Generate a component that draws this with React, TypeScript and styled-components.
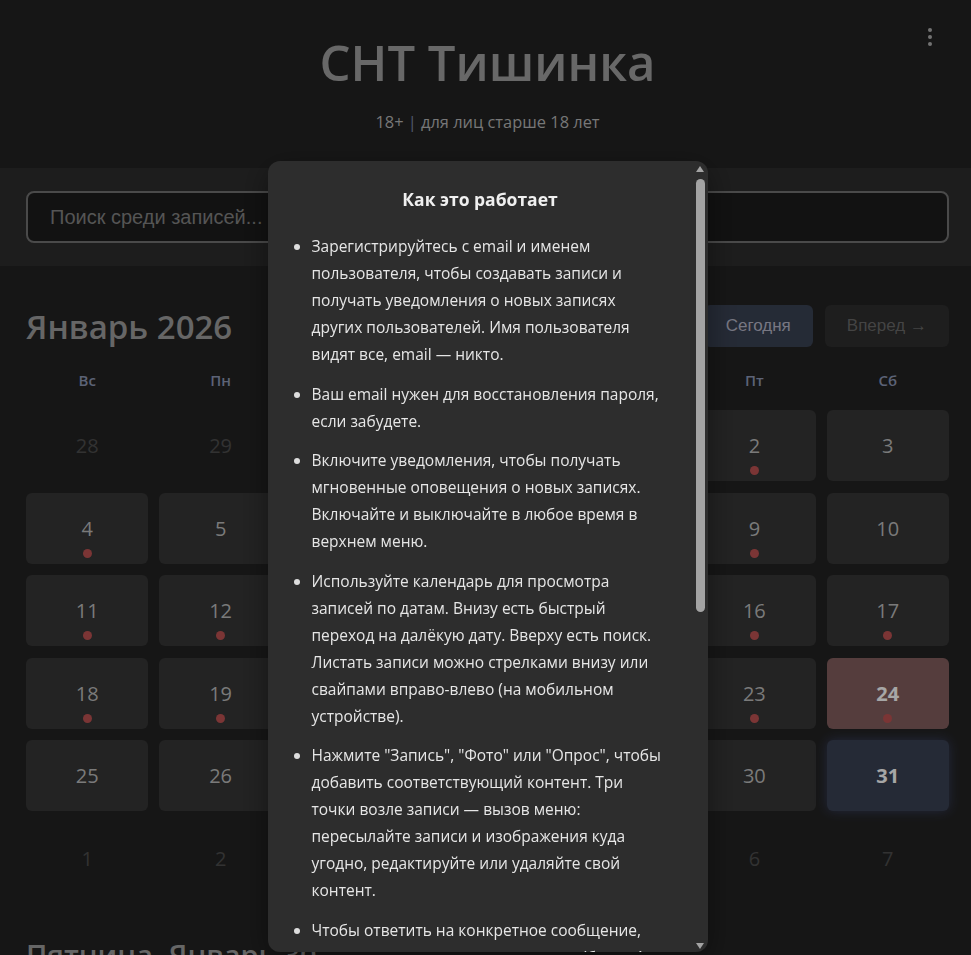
import React from 'react';
import styled, { createGlobalStyle, css } from 'styled-components';

const GlobalStyle = createGlobalStyle`
  * { box-sizing: border-box; }
  html, body {
    margin: 0;
    background: #232323;
    overflow: hidden;
  }
  body {
    font-family: "Open Sans", "Noto Sans", sans-serif;
    color: #bcbcbc;
  }
`;

const Shell = styled.div`
  width: 975px;
  min-height: 955px;
  background: #232323;
`;

const Header = styled.header`
  position: relative;
  padding: 33px 0 35px;
  text-align: center;
`;

const Title = styled.h1`
  margin: 0;
  font-size: 49px;
  line-height: 58px;
  font-weight: 600;
  color: #a0a0a0;
`;

const Subtitle = styled.p`
  margin: 20px 0 0;
  font-size: 16.4px;
  line-height: 22px;
  color: #b7b7b7;
`;

const Divider = styled.span`
  color: #7d8aa8;
`;

const MenuButton = styled.button`
  position: absolute;
  top: 25px;
  right: 33px;
  width: 24px;
  height: 24px;
  padding: 0;
  border: 0;
  background: none;
  display: flex;
  flex-direction: column;
  align-items: center;
  justify-content: center;
  gap: 3px;
  cursor: pointer;

  span {
    width: 4px;
    height: 4px;
    border-radius: 50%;
    background: #b0b0b0;
  }
`;

const SearchBand = styled.div`
  background: #2d2d2d;
  padding: 23px 26px;
`;

const SearchInput = styled.input`
  display: block;
  width: 100%;
  height: 52px;
  padding: 0 22px;
  border: 2px solid #727272;
  border-radius: 8px;
  background: #1c1c1c;
  color: #ddd;
  font-family: "Liberation Sans", Arial, sans-serif;
  font-size: 20px;
  outline: none;

  &::placeholder {
    color: #838383;
  }
`;

const Calendar = styled.section`
  padding: 39px 26px 0;
`;

const MonthBar = styled.div`
  display: flex;
  align-items: center;
  justify-content: space-between;
  height: 42px;
`;

const MonthTitle = styled.h2`
  margin: 0;
  font-size: 33px;
  font-weight: 600;
  color: #9d9d9d;
`;

const NavGroup = styled.div`
  display: flex;
  gap: 12px;
`;

const NavButton = styled.button<{ $variant?: 'accent' | 'muted' }>`
  height: 42px;
  padding: 0 22px;
  border: 0;
  border-radius: 6px;
  font-family: "Liberation Sans", Arial, sans-serif;
  font-size: 17px;
  cursor: pointer;
  background: #3a3a3a;
  color: #b7b7b7;

  ${({ $variant }) =>
    $variant === 'accent' &&
    css`
      background: #3a4253;
      color: #b7b7c8;
    `}

  ${({ $variant }) =>
    $variant === 'muted' &&
    css`
      background: #2e2e2e;
      color: #696969;
    `}
`;

const WeekRow = styled.div`
  display: grid;
  grid-template-columns: repeat(7, 1fr);
  column-gap: 11px;
  margin-top: 21px;
`;

const WeekDay = styled.div`
  text-align: center;
  font-size: 15px;
  line-height: 24px;
  font-weight: 600;
  color: #8e98b6;
`;

const DaysGrid = styled.div`
  display: grid;
  grid-template-columns: repeat(7, 1fr);
  grid-auto-rows: 71px;
  column-gap: 11px;
  row-gap: 11.5px;
  margin-top: 18px;
`;

type Tone = 'plain' | 'selected' | 'today' | 'outside';

const DayCell = styled.div<{ $tone: Tone }>`
  position: relative;
  display: flex;
  align-items: center;
  justify-content: center;
  border-radius: 6px;
  font-size: 20px;
  color: #bcbcbc;
  background: #363636;
  cursor: pointer;

  ${({ $tone }) =>
    $tone === 'outside' &&
    css`
      background: transparent;
      color: #4e4e4e;
    `}

  ${({ $tone }) =>
    $tone === 'selected' &&
    css`
      background: #835f5f;
      color: #fff;
      font-weight: 700;
    `}

  ${({ $tone }) =>
    $tone === 'today' &&
    css`
      background: #3a4153;
      color: #fff;
      font-weight: 700;
      box-shadow: 0 0 12px rgba(90, 110, 200, 0.35);
    `}
`;

const Dot = styled.span`
  position: absolute;
  left: 50%;
  bottom: 6px;
  width: 9px;
  height: 9px;
  margin-left: -4.5px;
  border-radius: 50%;
  background: #bd5252;
`;

const DayHeading = styled.h2`
  margin: 41px 0 0;
  font-size: 29px;
  font-weight: 600;
  color: #9d9d9d;
`;

const Overlay = styled.div`
  position: fixed;
  top: 0;
  left: 0;
  width: 975px;
  height: 100vh;
  background: rgba(0, 0, 0, 0.35);
  display: flex;
  justify-content: center;
  align-items: flex-start;
  padding-top: 161px;
`;

const Modal = styled.div`
  display: flex;
  width: 440px;
  height: 791px;
  overflow: hidden;
  background: #2d2d2d;
  border-radius: 12px;
  color: #e6e6e6;
  box-shadow: 0 8px 30px rgba(0, 0, 0, 0.4);
`;

const ModalBody = styled.div`
  flex: 1;
  min-width: 0;
  overflow-y: auto;
  scrollbar-width: none;
  padding: 26px 24px 24px;

  &::-webkit-scrollbar {
    display: none;
  }
`;

const ScrollRail = styled.div`
  flex: 0 0 15px;
  display: flex;
  flex-direction: column;
  align-items: center;
  padding: 5px 0 3px;
`;

const RailArrow = styled.span<{ $dir: 'up' | 'down' }>`
  width: 0;
  height: 0;
  border-left: 4.5px solid transparent;
  border-right: 4.5px solid transparent;
  ${({ $dir }) =>
    $dir === 'up'
      ? css`
          border-bottom: 6px solid #a3a3a3;
        `
      : css`
          border-top: 6px solid #a3a3a3;
          margin-top: auto;
        `}
`;

const RailThumb = styled.span`
  width: 9px;
  height: 433px;
  margin-top: 7px;
  border-radius: 5px;
  background: #a3a3a3;
`;

const ModalTitle = styled.h3`
  margin: 0 0 22px;
  text-align: center;
  font-size: 17.5px;
  line-height: 24px;
  font-weight: 700;
  color: #f0f0f0;
`;

const Tips = styled.ul`
  margin: 0;
  padding-left: 20px;
`;

const Tip = styled.li`
  margin-bottom: 12.5px;
  font-size: 15.5px;
  line-height: 27px;

  &::marker {
    color: #ddd;
  }
`;

const CloseButton = styled.button`
  display: block;
  width: 100%;
  height: 44px;
  margin-top: 24px;
  border: 0;
  border-radius: 8px;
  background: #3a4253;
  color: #e6e6e6;
  font-family: inherit;
  font-size: 16px;
  cursor: pointer;
`;

const weekDays = ['Вс', 'Пн', 'Вт', 'Ср', 'Чт', 'Пт', 'Сб'];

const withPosts = new Set([2, 4, 6, 8, 9, 11, 12, 13, 15, 16, 17, 18, 19, 20, 22, 23, 24, 27, 29]);

type Day = { n: number; tone: Tone; dot: boolean };

const buildMonth = (): Day[] => {
  const days: Day[] = [];
  [28, 29, 30, 31].forEach((n) => days.push({ n, tone: 'outside', dot: false }));
  for (let n = 1; n <= 31; n++) {
    let tone: Tone = 'plain';
    if (n === 24) tone = 'selected';
    if (n === 31) tone = 'today';
    days.push({ n, tone, dot: withPosts.has(n) });
  }
  for (let n = 1; n <= 7; n++) days.push({ n, tone: 'outside', dot: false });
  return days;
};

const tips = [
  'Зарегистрируйтесь с email и именем пользователя, чтобы создавать записи и получать уведомления о новых записях других пользователей. Имя пользователя видят все, email — никто.',
  'Ваш email нужен для восстановления пароля, если забудете.',
  'Включите уведомления, чтобы получать мгновенные оповещения о новых записях. Включайте и выключайте в любое время в верхнем меню.',
  'Используйте календарь для просмотра записей по датам. Внизу есть быстрый переход на далёкую дату. Вверху есть поиск. Листать записи можно стрелками внизу или свайпами вправо-влево (на мобильном устройстве).',
  'Нажмите "Запись", "Фото" или "Опрос", чтобы добавить соответствующий контент. Три точки возле записи — вызов меню: пересылайте записи и изображения куда угодно, редактируйте или удаляйте свой контент.',
  'Чтобы ответить на конкретное сообщение, нажмите на него долгим нажатием (более 1 секунды) или свайпом влево.',
  'Дни с записями отмечены в календаре красной точкой.',
  'Фото открываются на весь экран по нажатию. Приближайте их жестом или колесом мыши.',
  'Добавьте сайт на главный экран телефона, чтобы пользоваться им как приложением.',
  'Соблюдайте правила общения: без оскорблений, спама и рекламы. Нарушителей блокирует администратор.',
  'Вопросы и предложения пишите администратору через верхнее меню.',
];

const App = () => {
  const month = buildMonth();

  return (
    <>
      <GlobalStyle />
      <Shell>
        <Header>
          <Title>СНТ Тишинка</Title>
          <Subtitle>
            18+ <Divider>|</Divider> для лиц старше 18 лет
          </Subtitle>
          <MenuButton aria-label="Меню">
            <span />
            <span />
            <span />
          </MenuButton>
        </Header>

        <SearchBand>
          <SearchInput placeholder="Поиск среди записей..." />
        </SearchBand>

        <Calendar>
          <MonthBar>
            <MonthTitle>Январь 2026</MonthTitle>
            <NavGroup>
              <NavButton>← Назад</NavButton>
              <NavButton $variant="accent">Сегодня</NavButton>
              <NavButton $variant="muted">Вперед →</NavButton>
            </NavGroup>
          </MonthBar>

          <WeekRow>
            {weekDays.map((d) => (
              <WeekDay key={d}>{d}</WeekDay>
            ))}
          </WeekRow>

          <DaysGrid>
            {month.map((day, i) => (
              <DayCell key={i} $tone={day.tone}>
                {day.n}
                {day.dot && <Dot />}
              </DayCell>
            ))}
          </DaysGrid>

          <DayHeading>Пятница, Январь 30</DayHeading>
        </Calendar>
      </Shell>

      <Overlay>
        <Modal>
          <ModalBody>
            <ModalTitle>Как это работает</ModalTitle>
            <Tips>
              {tips.map((t) => (
                <Tip key={t}>{t}</Tip>
              ))}
            </Tips>
            <CloseButton>Понятно</CloseButton>
          </ModalBody>
          <ScrollRail>
            <RailArrow $dir="up" />
            <RailThumb />
            <RailArrow $dir="down" />
          </ScrollRail>
        </Modal>
      </Overlay>
    </>
  );
};

export default App;
